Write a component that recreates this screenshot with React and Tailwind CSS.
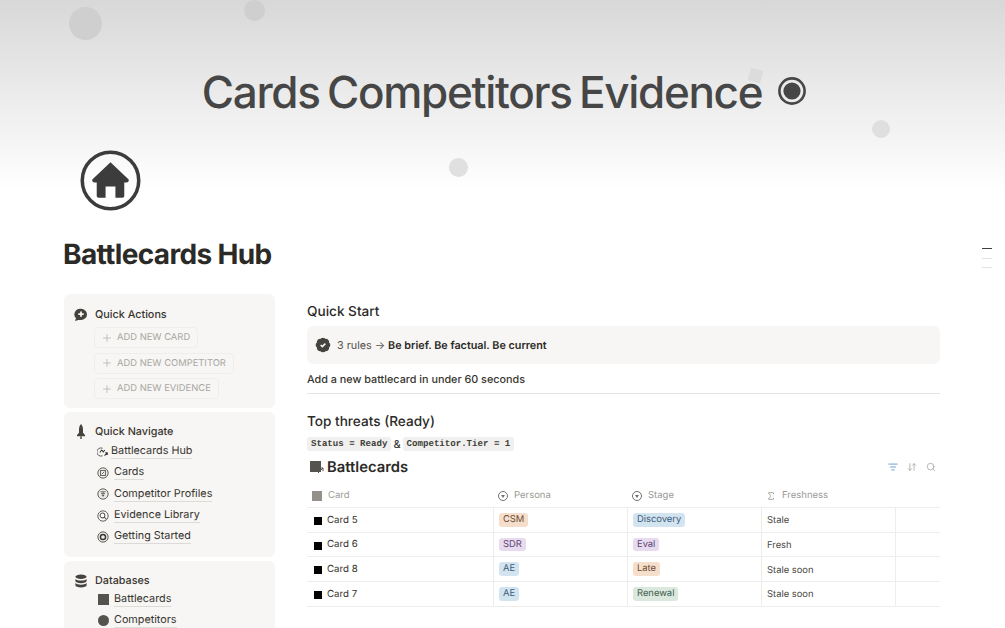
import React from "react";
import { Plus, ListFilter, ArrowDownUp, Search, Sigma } from "lucide-react";

const sans = "font-['Inter','Liberation_Sans',sans-serif] [text-rendering:geometricPrecision]";

function Dot({ className }) {
  return <div className={`absolute rounded-full ${className}`} />;
}

function TargetIcon() {
  return (
    <svg width="30" height="30" viewBox="0 0 30 30" className="ml-[15px] mt-[-2px]">
      <circle cx="15" cy="15" r="12.6" fill="none" stroke="#464646" strokeWidth="2.6" />
      <circle cx="15" cy="15" r="8.6" fill="#464646" />
    </svg>
  );
}

function HomeIcon() {
  return (
    <svg width="61" height="61" viewBox="0 0 62 62">
      <circle cx="31" cy="31" r="28.7" fill="none" stroke="#3c3c3c" strokeWidth="3.6" />
      <path d="M31 12.5 L49.5 30 Q50 33 47 33 L45 33 L45 47 Q45 48.5 43 48.5 L36 48.5 L36 37 L26 37 L26 48.5 L19 48.5 Q17 48.5 17 47 L17 33 L15 33 Q12 33 12.5 30 Z" fill="#3c3c3c" />
    </svg>
  );
}

function CircleGlyph({ children }) {
  return (
    <svg width="12" height="12" viewBox="0 0 14 14" className="shrink-0">
      <circle cx="7" cy="7" r="6" fill="#eeedeb" stroke="#55534e" strokeWidth="1.1" />
      {children}
    </svg>
  );
}

const glyphs = {
  hub: (
    <svg width="11" height="10" viewBox="0 0 14 12" className="shrink-0">
      <path d="M7 1.2a5.2 5.2 0 1 0 0 9.6" fill="none" stroke="#55534e" strokeWidth="1.2" />
      <path d="M3.6 6.6 6 3.4l2 2.4L10 3.4M9.5 10.6l3.6-3.6M10.4 7h2.7v2.7" fill="none" stroke="#37352f" strokeWidth="1.3" />
    </svg>
  ),
  cards: (
    <CircleGlyph>
      <rect x="4.2" y="4" width="5.6" height="6" fill="none" stroke="#55534e" strokeWidth="1" />
      <path d="M5.6 8.4 8.4 5.6" stroke="#55534e" strokeWidth="1" />
    </CircleGlyph>
  ),
  comp: (
    <CircleGlyph>
      <path d="M4 4.4h6M4.6 6.6h4.8M5.6 8.8h2.8" stroke="#55534e" strokeWidth="1" />
      <path d="M7 4.4v6" stroke="#55534e" strokeWidth="0.8" />
    </CircleGlyph>
  ),
  evid: (
    <svg width="12" height="12" viewBox="0 0 14 14" className="shrink-0">
      <circle cx="7" cy="7" r="6" fill="#fff" stroke="#55534e" strokeWidth="1.1" />
      <circle cx="6.4" cy="6.4" r="2.8" fill="none" stroke="#55534e" strokeWidth="1.2" />
      <path d="M8.4 8.4 11 11" stroke="#55534e" strokeWidth="1.2" />
    </svg>
  ),
  start: (
    <CircleGlyph>
      <circle cx="7" cy="7" r="3" fill="none" stroke="#37352f" strokeWidth="1.7" />
    </CircleGlyph>
  ),
};

function NavLink({ icon, label, gap = "gap-[5px]" }) {
  return (
    <div className={`flex items-center h-[21.3px] ${gap} text-[10.8px] text-[#37352f]`}>
      {icon}
      <span className="border-b border-[#dcdbd8] leading-[14px]">{label}</span>
    </div>
  );
}

function AddButton({ label }) {
  return (
    <div className="flex items-center h-[21px] w-fit gap-[4px] pl-[6px] pr-[7px] rounded-[4px] border border-[#efeeec] text-[#a8a6a1] text-[9.4px]">
      <Plus size={12} strokeWidth={1.2} color="#a5a3a0" />
      <span className="pt-[1px]">{label}</span>
    </div>
  );
}

function Panel({ className, children }) {
  return <section className={`bg-[#f7f6f4] rounded-[6px] pl-[10px] pr-2 ${className}`}>{children}</section>;
}

function PanelTitle({ icon, children }) {
  return (
    <div className="flex items-center h-[16px] text-[10.8px] font-medium text-[#37352f]">
      <span className="w-[21px] shrink-0 flex">{icon}</span>
      {children}
    </div>
  );
}

const tones = {
  orange: "bg-[#f5dfcc] text-[#6b4a33]",
  purple: "bg-[#e8dbf0] text-[#5b4470]",
  blue: "bg-[#d3e4f1] text-[#3c5a78]",
  green: "bg-[#dbe8de] text-[#41604d]",
};

function Tag({ tone, children }) {
  return <span className={`inline-block h-[13.5px] leading-[13.5px] px-[4px] rounded-[3px] text-[9.4px] ${tones[tone]}`}>{children}</span>;
}

const rows = [
  ["Card 5", "CSM", "orange", "Discovery", "blue", "Stale"],
  ["Card 6", "SDR", "purple", "Eval", "purple", "Fresh"],
  ["Card 8", "AE", "blue", "Late", "orange", "Stale soon"],
  ["Card 7", "AE", "blue", "Renewal", "green", "Stale soon"],
];

const grid = "grid grid-cols-[186px_134px_134px_134px_45px]";

function HeadCell({ icon, children }) {
  return (
    <div className="flex items-center gap-[6px] pl-[5px] pt-[1px] text-[9.5px] text-[#9b9a97]">
      {icon}
      {children}
    </div>
  );
}

function SelectIcon() {
  return (
    <span className="w-[10px] h-[10px] rounded-full border border-[#73716c] flex items-center justify-center">
      <span className="w-0 h-0 border-l-[2px] border-r-[2px] border-t-[3px] border-l-transparent border-r-transparent border-t-[#73716c]" />
    </span>
  );
}

export default function App() {
  return (
    <div className={`${sans} relative w-[1005px] h-[628px] overflow-hidden bg-white`}>
      <header className="relative h-[190px] bg-gradient-to-b from-[#d8d8d8] to-[#ffffff] flex justify-center items-start pt-[65px]">
        <Dot className="left-[69px] top-[7px] w-[33px] h-[33px] bg-[#cfcfcf]" />
        <Dot className="left-[244px] top-0 w-[21px] h-[21px] bg-[#cfcfcf]" />
        <Dot className="left-[872px] top-[120px] w-[18px] h-[18px] bg-[#dfdfdf]" />
        <Dot className="left-[449px] top-[158px] w-[19px] h-[19px] bg-[#e0e0e0]" />
        <div className="absolute left-[749px] top-[69px] w-[13px] h-[13px] bg-[#dcdcdc] rotate-[15deg]" />
        <div className="relative flex items-center text-[44px] leading-[54px] font-medium tracking-[-1.3px] text-[#464646] font-['Inter',sans-serif] translate-x-[2px]">
          <span className="[word-spacing:-3px]">Cards Competitors Evidence</span>
          <TargetIcon />
        </div>
        <div className="absolute left-[80px] top-[150px]"><HomeIcon /></div>
      </header>

      <main className="px-[63px]">
        <h1 className="pt-[46px] h-[104px] text-[28px] leading-[36px] font-bold tracking-[-0.65px] text-[#2b2a27]">Battlecards Hub</h1>

        <div className="flex items-start">
          <aside className="w-[211px] ml-px flex flex-col gap-[4px] shrink-0">
            <Panel className="h-[114px] pt-[13px]">
              <PanelTitle icon={
                <svg width="14" height="14" viewBox="0 0 14 14">
                  <path d="M7 .8a6 5.6 0 0 1 0 11.2H4.4L1 13l1-2.8A6 5.6 0 0 1 7 .8Z" fill="#45433e" />
                  <path d="M7 3.4v5.4M4.3 6.1h5.4" stroke="#f7f6f4" strokeWidth="1.8" />
                </svg>
              }>Quick Actions</PanelTitle>
              <div className="ml-[20px] mt-[4px] flex flex-col gap-[4.6px]">
                <AddButton label="ADD NEW CARD" />
                <AddButton label="ADD NEW COMPETITOR" />
                <AddButton label="ADD NEW EVIDENCE" />
              </div>
            </Panel>

            <Panel className="h-[145px] pt-[12px]">
              <PanelTitle icon={
                <svg width="14" height="16" viewBox="0 0 14 16">
                  <path d="M7 0C8.4 1.5 9 3.6 9 5.6v3.2l2 2.2v1.2H3V11l2-2.2V5.6C5 3.6 5.6 1.5 7 0Z M6.3 12.6h1.4V15H6.3Z" fill="#45433e" />
                </svg>
              }>Quick Navigate</PanelTitle>
              <div className="ml-[23px] mt-[1px] flex flex-col">
                <NavLink icon={glyphs.hub} label="Battlecards Hub" gap="gap-[3px]" />
                <NavLink icon={glyphs.cards} label="Cards" />
                <NavLink icon={glyphs.comp} label="Competitor Profiles" />
                <NavLink icon={glyphs.evid} label="Evidence Library" />
                <NavLink icon={glyphs.start} label="Getting Started" />
              </div>
            </Panel>

            <Panel className="h-[100px] pt-[12px]">
              <PanelTitle icon={
                <svg width="14" height="14" viewBox="0 0 14 14">
                  <ellipse cx="7" cy="2.7" rx="5.6" ry="2.2" fill="#45433e" />
                  <path d="M1.4 4.9C2.4 6.2 4.6 6.6 7 6.6s4.6-.4 5.6-1.7v2.2C12.6 8.4 10 9.3 7 9.3S1.4 8.4 1.4 7.1Z" fill="#45433e" />
                  <path d="M1.4 9.1c1 1.3 3.2 1.7 5.6 1.7s4.6-.4 5.6-1.7v2.2c0 1.3-2.6 2.2-5.6 2.2s-5.6-.9-5.6-2.2Z" fill="#45433e" />
                </svg>
              }>Databases</PanelTitle>
              <div className="ml-[24px] flex flex-col">
                <NavLink icon={<span className="w-[11px] h-[11px] bg-[#55534e] shrink-0" />} label="Battlecards" />
                <NavLink icon={<span className="w-[11px] h-[11px] rounded-full bg-[#55534e] shrink-0" />} label="Competitors" />
              </div>
            </Panel>
          </aside>

          <div className="ml-[32px] w-[633px] shrink-0">
            <h2 className="mt-[10px] text-[13.6px] leading-[17px] font-medium text-[#2b2a27]">Quick Start</h2>
            <div className="mt-[5px] h-[38px] bg-[#f7f6f4] rounded-[6px] flex items-center pl-[8px] text-[10.8px]">
              <svg width="16" height="16" viewBox="0 0 24 24" className="shrink-0">
                <path d="M3.85 8.62a4 4 0 0 1 4.78-4.77 4 4 0 0 1 6.74 0 4 4 0 0 1 4.78 4.78 4 4 0 0 1 0 6.74 4 4 0 0 1-4.77 4.78 4 4 0 0 1-6.75 0 4 4 0 0 1-4.78-4.77 4 4 0 0 1 0-6.76Z" fill="#45433e" stroke="#45433e" strokeWidth="2" />
                <path d="m8.5 12 2.5 2.5 4.5-4.5" fill="none" stroke="#f7f6f4" strokeWidth="2.4" />
              </svg>
              <span className="ml-[6px] pt-[2px] text-[#55534e]">3 rules → </span>
              <span className="ml-[3px] pt-[2px] font-semibold text-[#2b2a27]">Be brief. Be factual. Be current</span>
            </div>
            <p className="mt-[9px] text-[10.8px] leading-[14px] font-medium text-[#37352f]">Add a new battlecard in under 60 seconds</p>
            <div className="mt-[6px] h-px bg-[#e6e5e3]" />

            <h2 className="mt-[20px] text-[13.6px] leading-[17px] font-medium text-[#2b2a27]">Top threats (Ready)</h2>
            <div className="mt-[6px] flex items-center h-[14px] text-[9.1px] font-['Liberation_Mono',monospace] font-bold text-[#3f3e3a]">
              <span className="bg-[#f1f0ee] rounded-[2px] px-[4px] leading-[14px]">Status = Ready</span>
              <span className="px-[2px] text-[11px] font-['Inter',sans-serif] font-medium">&amp;</span>
              <span className="bg-[#f1f0ee] rounded-[2px] px-[4px] leading-[14px]">Competitor.Tier = 1</span>
            </div>

            <div className="mt-[5px] h-[22px] flex items-center">
              <span className="relative w-[14px] h-[14px] ml-[3px] flex">
                <span className="w-[11px] h-[11px] mt-[1px] bg-[#55534e]" />
                <svg width="7" height="7" viewBox="0 0 7 7" className="absolute right-0 bottom-0">
                  <path d="M1 6 6 1M2.8 1H6v3.2" fill="none" stroke="#55534e" strokeWidth="1" />
                </svg>
              </span>
              <span className="ml-[3px] text-[14.8px] font-semibold text-[#2b2a27]">Battlecards</span>
              <div className="ml-auto mr-[4px] flex items-center gap-[9px]">
                <ListFilter size={10} color="#4f8fc9" strokeWidth={2} />
                <ArrowDownUp size={10} color="#8f8e8a" strokeWidth={1.5} />
                <Search size={10} color="#8f8e8a" strokeWidth={1.5} />
              </div>
            </div>

            <div className={`${grid} mt-[6px] h-[24px] border-b border-[#eeedeb]`}>
              <HeadCell icon={<span className="w-[10px] h-[10px] bg-[#94918b]" />}>Card</HeadCell>
              <HeadCell icon={<SelectIcon />}>Persona</HeadCell>
              <HeadCell icon={<SelectIcon />}>Stage</HeadCell>
              <HeadCell icon={<Sigma size={10} color="#73716c" strokeWidth={1.5} />}>Freshness</HeadCell>
              <div />
            </div>
            {rows.map((r) => (
              <div key={r[0]} className={`${grid} h-[24.7px] border-b border-[#eeedeb] text-[9.7px] text-[#37352f]`}>
                <div className="flex items-center gap-[5px] pl-[7px] pt-[2px]">
                  <span className="w-[8px] h-[8px] bg-black" />
                  {r[0]}
                </div>
                <div className="flex items-start pt-[5px] pl-[5px] border-l border-[#eeedeb]"><Tag tone={r[2]}>{r[1]}</Tag></div>
                <div className="flex items-start pt-[5px] pl-[5px] border-l border-[#eeedeb]"><Tag tone={r[4]}>{r[3]}</Tag></div>
                <div className="flex items-center pl-[5px] pt-[3px] border-l border-[#eeedeb] text-[9.4px] text-[#4a4944]">{r[5]}</div>
                <div className="border-l border-[#eeedeb]" />
              </div>
            ))}
          </div>
        </div>
      </main>

      <div className="absolute right-[13px] top-[248px] w-[10px] flex flex-col gap-[8.5px]">
        <span className="h-px bg-[#3f3f3f]" />
        <span className="h-px bg-[#e3e3e3]" />
        <span className="h-px bg-[#e3e3e3]" />
      </div>
    </div>
  );
}
